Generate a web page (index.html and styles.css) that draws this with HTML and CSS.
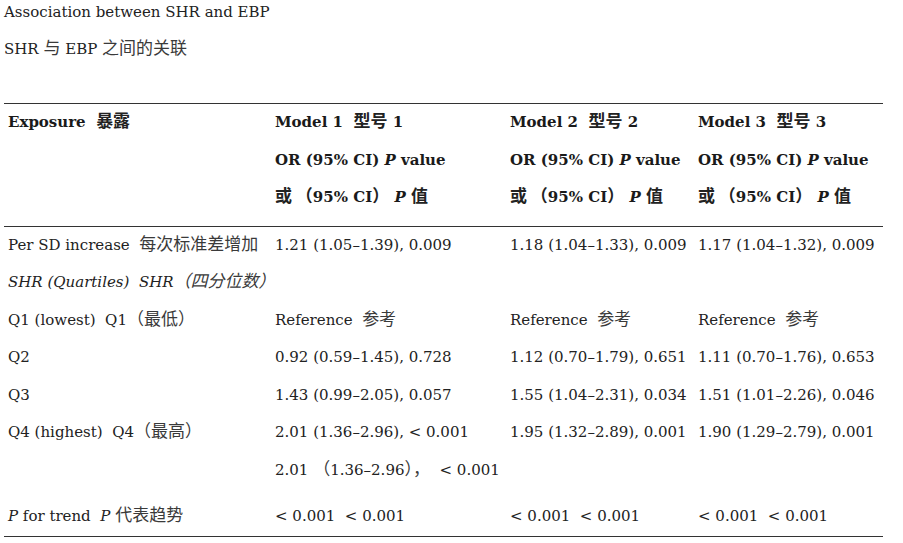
FILE: index.html
```html
<!DOCTYPE html>
<html lang="zh">
<head>
<meta charset="utf-8">
<title>Association between SHR and EBP</title>
<link rel="stylesheet" href="styles.css">
</head>
<body>
<div class="page">
  <p class="title">Association between SHR and EBP</p>
  <p class="title sub">SHR <span class="zh">与</span> EBP <span class="zh">之间的关联</span></p>

  <div class="table">
    <div class="cell head">
      <div class="ln b">Exposure&nbsp; <span class="zh">暴露</span></div>
    </div>
    <div class="cell head">
      <div class="ln b">Model 1&nbsp; <span class="zh">型号</span> 1</div>
      <div class="ln b">OR (95% CI) <i>P</i> value</div>
      <div class="ln b"><span class="zh">或 （</span>95% CI<span class="zh">）</span> <i>P</i> <span class="zh">值</span></div>
    </div>
    <div class="cell head">
      <div class="ln b">Model 2&nbsp; <span class="zh">型号</span> 2</div>
      <div class="ln b">OR (95% CI) <i>P</i> value</div>
      <div class="ln b"><span class="zh">或 （</span>95% CI<span class="zh">）</span> <i>P</i> <span class="zh">值</span></div>
    </div>
    <div class="cell head">
      <div class="ln b">Model 3&nbsp; <span class="zh">型号</span> 3</div>
      <div class="ln b">OR (95% CI) <i>P</i> value</div>
      <div class="ln b"><span class="zh">或 （</span>95% CI<span class="zh">）</span> <i>P</i> <span class="zh">值</span></div>
    </div>

    <div class="cell"><div class="ln">Per SD increase&nbsp; <span class="zh">每次标准差增加</span></div></div>
    <div class="cell"><div class="ln">1.21 (1.05–1.39), 0.009</div></div>
    <div class="cell"><div class="ln">1.18 (1.04–1.33), 0.009</div></div>
    <div class="cell"><div class="ln">1.17 (1.04–1.32), 0.009</div></div>

    <div class="cell"><div class="ln it">SHR (Quartiles)&nbsp; SHR<span class="zh">（四分位数）</span></div></div>
    <div class="cell"></div>
    <div class="cell"></div>
    <div class="cell"></div>

    <div class="cell"><div class="ln">Q1 (lowest)&nbsp; Q1<span class="zh">（最低）</span></div></div>
    <div class="cell"><div class="ln">Reference&nbsp; <span class="zh">参考</span></div></div>
    <div class="cell"><div class="ln">Reference&nbsp; <span class="zh">参考</span></div></div>
    <div class="cell"><div class="ln">Reference&nbsp; <span class="zh">参考</span></div></div>

    <div class="cell"><div class="ln">Q2</div></div>
    <div class="cell"><div class="ln">0.92 (0.59–1.45), 0.728</div></div>
    <div class="cell"><div class="ln">1.12 (0.70–1.79), 0.651</div></div>
    <div class="cell"><div class="ln">1.11 (0.70–1.76), 0.653</div></div>

    <div class="cell"><div class="ln">Q3</div></div>
    <div class="cell"><div class="ln">1.43 (0.99–2.05), 0.057</div></div>
    <div class="cell"><div class="ln">1.55 (1.04–2.31), 0.034</div></div>
    <div class="cell"><div class="ln">1.51 (1.01–2.26), 0.046</div></div>

    <div class="cell gap"><div class="ln">Q4 (highest)&nbsp; Q4<span class="zh">（最高）</span></div></div>
    <div class="cell gap">
      <div class="ln">2.01 (1.36–2.96), &lt; 0.001</div>
      <div class="ln">2.01 <span class="zh">（</span>1.36–2.96<span class="zh">），</span>&nbsp; &lt; 0.001</div>
    </div>
    <div class="cell gap"><div class="ln">1.95 (1.32–2.89), 0.001</div></div>
    <div class="cell gap"><div class="ln">1.90 (1.29–2.79), 0.001</div></div>

    <div class="cell last"><div class="ln"><i>P</i> for trend&nbsp; <i>P</i> <span class="zh">代表趋势</span></div></div>
    <div class="cell last"><div class="ln">&lt; 0.001&nbsp; &lt; 0.001</div></div>
    <div class="cell last"><div class="ln">&lt; 0.001&nbsp; &lt; 0.001</div></div>
    <div class="cell last"><div class="ln">&lt; 0.001&nbsp; &lt; 0.001</div></div>
  </div>
</div>
</body>
</html>
```

FILE: styles.css
```css
html, body {
  margin: 0;
  padding: 0;
  background: #ffffff;
}

body {
  font-family: "DejaVu Serif", "Noto Sans CJK SC", serif;
  font-size: 15px;
  color: #222222;
}

.page {
  padding: 0 20px 0 4px;
  width: 879px;
}

.title {
  margin: 0;
  height: 37px;
  line-height: 24px;
}

.title.sub {
  height: 66px;
}

.zh {
  font-family: "Noto Sans CJK SC", sans-serif;
  font-size: 17px;
  line-height: 1;
  color: #3a3a3a;
}

.b .zh {
  color: #222222;
}

.table {
  display: grid;
  grid-template-columns: 267px 235px 188px 1fr;
  border-top: 1px solid #333333;
  border-bottom: 1.5px solid #333333;
}

.cell {
  padding-left: 4px;
  white-space: nowrap;
}

.head {
  padding-bottom: 9px;
  border-bottom: 1px solid #333333;
}

.gap {
  padding-bottom: 9px;
}

.ln {
  height: 37.5px;
  line-height: 37.5px;
}

.b {
  font-weight: bold;
  color: #1a1a1a;
}

.it {
  font-style: italic;
}

i {
  font-style: italic;
}
```
